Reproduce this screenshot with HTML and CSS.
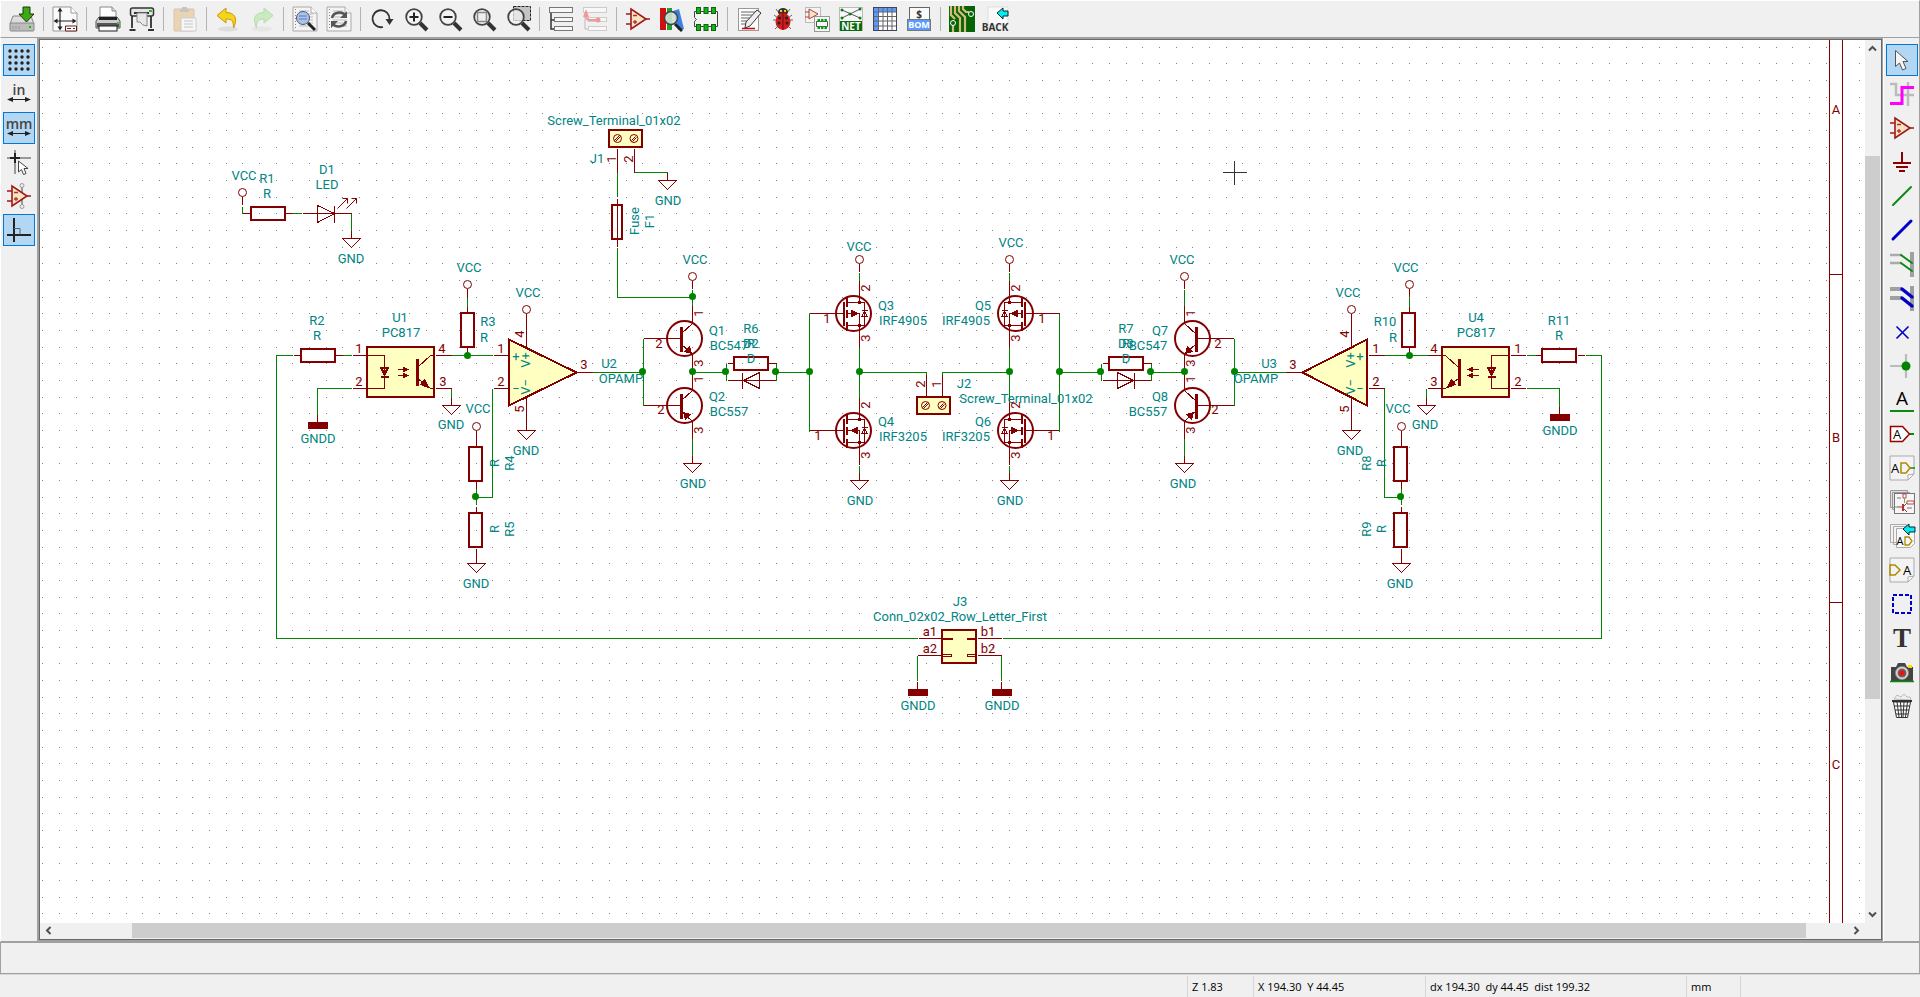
FILE: index.html
```html
<!DOCTYPE html>
<html lang="en">
<head>
<meta charset="utf-8">
<title>Schematic editor</title>
<link rel="stylesheet" href="styles.css">
</head>
<body>
<svg class="defs" aria-hidden="true">
<defs>
<g id="i-lens"><path d="M17 17l7 7" stroke="#333" stroke-width="4"/><circle cx="11" cy="11" r="7.8" fill="#f4f4f4" fill-opacity=".7" stroke="#444" stroke-width="1.8"/></g>
<g id="i-opamp"><path d="M1 8h5M1 18h5M20 13h5" stroke="#a01818" stroke-width="1.5"/><path d="M6 3v20l15-10z" fill="#f5e4c4" stroke="#a01818" stroke-width="1.6"/><path d="M8 9.5h4M8 16h4M10 14v4" stroke="#b03030" stroke-width="1.3"/></g>
<g id="i-page"><path d="M1 1h24v18l-6 6H1z" fill="#f3f3f3" stroke="#aaa"/><path d="M19 25v-5l6-1z" fill="#fff" stroke="#aaa"/></g>
<g id="i-sheet"><path d="M1 1h18l6 6v18H1z" fill="#f4f4f4" stroke="#aaa"/><path d="M19 1v6h6" fill="#fff" stroke="#aaa"/><path d="M7 5h10M7 8h14M7 11h14M7 14h14M7 17h14M7 20h14" stroke="#bbb"/><path d="M3.5 3v21" stroke="#888" stroke-dasharray="1 2"/></g>
</defs>
</svg>

<header class="toolbar">
<button class="tool" aria-label="Save"><svg viewBox="0 0 26 26"><path d="M4 10h18l3 8H1z" fill="#ddd" stroke="#888"/><rect x="1" y="17" width="24" height="8" rx="1" fill="#bcbcbc" stroke="#888"/><path d="M4 20v3M7 20v3M10 20v3" stroke="#999"/><rect x="20" y="20" width="2" height="2" fill="#0c0"/><path d="M14 1h7v7h4l-7.500 8L10 8h4z" fill="#3fa815" stroke="#143f06"/></svg></button>
<span class="sep"></span>
<button class="tool" aria-label="Page settings"><svg viewBox="0 0 26 26"><path d="M1 1h18l6 6v18H1z" fill="#fafafa" stroke="#999"/><path d="M19 1v6h6" fill="#fff" stroke="#999"/><path d="M8 3v20M3 15h20" stroke="#222" stroke-width="1.2"/><path d="M8 1.500l-2.500 4h5zM8 24.500l-2.500-4h5zM1.500 15l4-2.500v5zM24.500 15l-4-2.500v5z" fill="#222"/><path d="M13.500 20h11v5h-11zM15 22.500h4M21 22.500h2" fill="#fff" stroke="#602020"/></svg></button>
<span class="sep"></span>
<button class="tool" aria-label="Print"><svg viewBox="0 0 26 26"><path d="M5 1h12l4 4v9H5z" fill="#fff" stroke="#888"/><path d="M17 1v4h4" fill="#ddd" stroke="#888"/><path d="M4 11h18l3 4v7H1v-7z" fill="#ccc" stroke="#555"/><path d="M4 11h18v3H4z" fill="#222"/><rect x="2" y="17" width="22" height="4" fill="#555"/><rect x="4" y="20" width="18" height="5" fill="#fafafa" stroke="#222"/><rect x="22" y="16" width="2" height="2" fill="#3c3"/></svg></button>
<button class="tool" aria-label="Plot"><svg viewBox="0 0 26 26"><path d="M3 9v13M22 9v13" stroke="#444" stroke-width="2"/><path d="M.5 24h6M19 24h6" stroke="#333" stroke-width="2"/><rect x="1.500" y="2" width="23" height="8" rx="2" fill="#e4e4e4" stroke="#333" stroke-width="1.5"/><path d="M5 7h15" stroke="#333" stroke-width="2"/><path d="M8 7h10v13l-4-1-3-3H8z" fill="#e8e8e8" stroke="#888"/><rect x="20" y="4" width="3" height="2" fill="#1c1"/></svg></button>
<span class="sep"></span>
<button class="tool" aria-label="Paste" disabled><svg viewBox="0 0 26 26" class="dim"><rect x="2" y="3" width="20" height="22" rx="1" fill="#e6b878" stroke="#c8965a"/><path d="M8 6V3h2V1h5v2h2v3z" fill="#999"/><path d="M9 12h15v13H9z" fill="#fff" stroke="#aaa"/><path d="M12 15h9M12 18h9M12 21h9" stroke="#999"/></svg></button>
<span class="sep"></span>
<button class="tool" aria-label="Undo"><svg viewBox="0 0 26 26"><ellipse cx="13" cy="23" rx="10" ry="2.5" fill="#ddd"/><path d="M2 9.500L11 2v4.500c9 0 12 6 7.500 15.500 0-7-1-9-7.500-9V17z" fill="#f6d31c" stroke="#c79a00"/></svg></button>
<button class="tool" aria-label="Redo" disabled><svg viewBox="0 0 26 26" class="dim"><ellipse cx="13" cy="23" rx="10" ry="2.5" fill="#ddd"/><path d="M24 9.500L15 2v4.500c-9 0-12 6-7.500 15.500 0-7 1-9 7.500-9V17z" fill="#a4e890" stroke="#77cc66"/></svg></button>
<span class="sep"></span>
<button class="tool" aria-label="Find"><svg viewBox="0 0 26 26"><use href="#i-sheet"/><path d="M16 17l7 7" stroke="#222" stroke-width="3"/><circle cx="11" cy="12" r="6.5" fill="#a9c4ec" stroke="#556"/><path d="M7 10h8M7 13h8" stroke="#5a78b8"/></svg></button>
<button class="tool" aria-label="Find and replace"><svg viewBox="0 0 26 26"><use href="#i-sheet"/><path d="M6 12c1-6 10-7 13-3M20 15c-1 6-10 7-13 3" fill="none" stroke="#555" stroke-width="2.5"/><path d="M21 5v7h-7zM5 22v-7h7z" fill="#555"/></svg></button>
<span class="sep"></span>
<button class="tool" aria-label="Refresh"><svg viewBox="0 0 26 26"><path d="M14 21A8.500 8.500 0 1 1 20.500 13" fill="none" stroke="#333" stroke-width="1.8"/><path d="M16.500 13h8l-4 6z" fill="#333"/></svg></button>
<button class="tool" aria-label="Zoom in"><svg viewBox="0 0 26 26"><use href="#i-lens"/><path d="M6.500 11h9M11 6.500v9" stroke="#222" stroke-width="2"/></svg></button>
<button class="tool" aria-label="Zoom out"><svg viewBox="0 0 26 26"><use href="#i-lens"/><path d="M6.500 11h9" stroke="#222" stroke-width="2"/></svg></button>
<button class="tool" aria-label="Zoom to fit"><svg viewBox="0 0 26 26"><use href="#i-lens"/><rect x="6.5" y="6.5" width="9" height="9" fill="#eee" stroke="#888" stroke-width="1.5"/></svg></button>
<button class="tool" aria-label="Zoom to selection"><svg viewBox="0 0 26 26"><rect x="8.5" y=".5" width="17" height="14" fill="#c4c4c4" stroke="#222" stroke-dasharray="3 1"/><use href="#i-lens"/></svg></button>
<span class="sep"></span>
<button class="tool" aria-label="Hierarchy"><svg viewBox="0 0 26 26"><path d="M3 6v17h3M3 14h3" fill="none" stroke="#333" stroke-width="1.5"/><g fill="#f8f8f8" stroke="#777"><rect x="1.5" y="1.5" width="23" height="5"/><rect x="6.5" y="11.5" width="18" height="4"/><rect x="6.5" y="20.5" width="18" height="4"/></g></svg></button>
<button class="tool" aria-label="Leave sheet" disabled><svg viewBox="0 0 26 26"><path d="M3 6v17h3" fill="none" stroke="#bbb"/><g fill="#f8f8f8" stroke="#ccc"><rect x="1.5" y="1.5" width="23" height="5"/><rect x="6.5" y="11.5" width="18" height="4"/><rect x="6.5" y="20.5" width="18" height="4"/></g><path d="M16 14h-8c-3 0-4-2-4-5" fill="none" stroke="#f09898" stroke-width="2"/><path d="M4 3L1 11h6z" fill="#f09898"/><circle cx="16" cy="14" r="2.5" fill="#f09898"/></svg></button>
<span class="sep"></span>
<button class="tool" aria-label="Symbol editor"><svg viewBox="0 0 26 26"><use href="#i-opamp"/></svg></button>
<button class="tool" aria-label="Library browser"><svg viewBox="0 0 26 26"><rect x="1" y="2" width="6" height="22" fill="#d01010"/><rect x="8" y="2" width="5" height="22" fill="#20a030"/><path d="M14 5l6-2 5 20-6 1z" fill="#3c82e6"/><path d="M16 18l7 7" stroke="#222" stroke-width="3"/><circle cx="12" cy="12" r="6.5" fill="#cfe0d6" fill-opacity=".9" stroke="#444" stroke-width="1.5"/></svg></button>
<button class="tool" aria-label="Footprint editor"><svg viewBox="0 0 26 26"><path d="M1.500 5.500h23v15h-23v-5l2-2-2-2z" fill="#f4f4f4" stroke="#444"/><g fill="#0cb51c" stroke="#14600c"><rect x="3.5" y="1.5" width="4" height="6"/><rect x="11" y="1.5" width="4" height="6"/><rect x="18.5" y="1.5" width="4" height="6"/><rect x="3.5" y="18.5" width="4" height="6"/><rect x="11" y="18.5" width="4" height="6"/><rect x="18.5" y="18.5" width="4" height="6"/></g></svg></button>
<span class="sep"></span>
<button class="tool" aria-label="Annotate"><svg viewBox="0 0 26 26"><rect x="2.5" y="2.5" width="20" height="22" fill="#fdfdfd" stroke="#999"/><path d="M5 6h14M5 9h11M5 12h9M5 15h7M5 18h5" stroke="#666"/><path d="M6 22.500h13" stroke="#d00" stroke-width="1.5"/><path d="M21 4l4 3-11 13-5 2 1-6z" fill="#eee" stroke="#333"/></svg></button>
<button class="tool" aria-label="Rules check"><svg viewBox="0 0 26 26"><path d="M6 3l3 4M20 3l-3 4M3 14h4M23 14h-4M5 23l4-4M21 23l-4-4M4 9l4 3M22 9l-4 3" stroke="#666"/><ellipse cx="13" cy="6" rx="5" ry="4" fill="#333"/><path d="M10 5h2M14 5h2" stroke="#fc0" stroke-width="2"/><ellipse cx="13" cy="15.5" rx="7.500" ry="8.5" fill="#cf1c1c"/><path d="M13 7v17" stroke="#611"/><g fill="#222"><circle cx="9.5" cy="12" r="1.500"/><circle cx="16.5" cy="12" r="1.5"/><circle cx="9" cy="17" r="1.5"/><circle cx="17" cy="17" r="1.5"/></g></svg></button>
<button class="tool" aria-label="Assign footprints"><svg viewBox="0 0 26 26"><rect x="1.5" y="1.5" width="15" height="15" fill="#f4f4f4" stroke="#bbb"/><path d="M5 3v10l9-5z" fill="#f5e4c4" stroke="#b04040"/><path d="M1 6h4M1 11h4" stroke="#b04040"/><rect x="10.5" y="10.5" width="15" height="15" fill="#f6f6f6" stroke="#999"/><path d="M12.500 15.500h11v5h-11z" fill="none" stroke="#555"/><path d="M13.500 14.500h2.500M17 14.500h2.500M20.500 14.500h2.500M13.500 21.500h2.500M17 21.500h2.500M20.500 21.500h2.500" stroke="#0a9a18" stroke-width="3"/></svg></button>
<button class="tool" aria-label="Netlist"><svg viewBox="0 0 26 26"><rect x="1.5" y="1.5" width="23" height="23" fill="#f8f8f8" stroke="#bbb"/><path d="M4 4l18 8M22 3L4 12" stroke="#555"/><g fill="#0a7a14"><circle cx="4" cy="4" r="1.5"/><circle cx="22" cy="3" r="1.5"/><circle cx="4" cy="12" r="1.5"/><circle cx="22" cy="12" r="1.5"/><circle cx="12" cy="8" r="1.5"/></g><rect x="2" y="15" width="22" height="10" fill="#0b6a12"/><text class="icon-text light" x="13" y="23.5">NET</text></svg></button>
<button class="tool" aria-label="Symbol fields"><svg viewBox="0 0 26 26"><rect x="1.5" y="1.5" width="23" height="23" fill="#fff"/><path d="M1 1h24v5H6v19H1z" fill="#5b9bff"/><path d="M6.500 1v24M11 1v24M15.500 1v24M20 1v24M1 6h24M1 10.500h24M1 15h24M1 20h24" stroke="#666"/><rect x="1.5" y="1.5" width="23" height="23" fill="none" stroke="#445"/></svg></button>
<button class="tool" aria-label="Bill of materials"><svg viewBox="0 0 26 26"><rect x="3.5" y="1.5" width="20" height="14" fill="#fafafa" stroke="#666"/><text class="icon-text dark" x="13" y="12">$</text><rect x="1.5" y="13.5" width="23" height="11" fill="#5b9bff" stroke="#777"/><text class="icon-text light small" x="13" y="22">BOM</text></svg></button>
<span class="sep"></span>
<button class="tool" aria-label="Open board"><svg viewBox="0 0 26 26"><rect width="26" height="26" fill="#056405"/><path d="M2 0v9l4 4M6 0v7l5 5v14M10 0v5l6 6v15M14 0v3l3 3h3M4 17v9" fill="none" stroke="#dab97c" stroke-width="2.2"/><circle cx="22" cy="8" r="2.5" fill="#056405" stroke="#fff"/><circle cx="4" cy="17" r="2.5" fill="#056405" stroke="#fff"/></svg></button>
<button class="tool" aria-label="Back annotate"><svg viewBox="0 0 26 26"><path d="M5 1h20v18H5z" fill="#fafafa" stroke="#ddd"/><path d="M14 7l6-5v3h5v5h-5v3z" fill="#0ee" stroke="#123"/><text class="icon-text dark" x="12" y="25">BACK</text></svg></button>
</header>

<main class="workspace">
<nav class="side side-left" aria-label="Display options">
<button class="tool on" aria-label="Grid"><svg viewBox="0 0 26 26"><path d="M4 4h19M4 10h19M4 16h19M4 22h19" stroke="#222" stroke-width="3.4" stroke-linecap="round" stroke-dasharray="0 6"/></svg></button>
<button class="tool" aria-label="Inches"><svg viewBox="0 0 26 26"><text class="unit" x="13" y="14">in</text><path d="M4 18.500h18" stroke="#222"/><path d="M1 18.500l6-2.500v5zM25 18.500l-6-2.500v5z" fill="#222"/></svg></button>
<button class="tool on" aria-label="Millimetres"><svg viewBox="0 0 26 26"><text class="unit" x="13" y="14">mm</text><path d="M4 18.500h18" stroke="#222"/><path d="M1 18.500l6-2.500v5zM25 18.500l-6-2.500v5z" fill="#222"/></svg></button>
<button class="tool" aria-label="Cursor shape"><svg viewBox="0 0 26 26"><path d="M9 1v24M1 9h24" stroke="#999" stroke-width="2"/><path d="M9 4v10M4 9h10" stroke="#222" stroke-width="2"/><path d="M12.500 12v11l3-2.500 2 5 2.500-1-2-5h4z" fill="#fff" stroke="#444"/></svg></button>
<button class="tool" aria-label="Hidden pins"><svg viewBox="0 0 26 26"><path d="M16 4v18" stroke="#999" stroke-width="2"/><circle cx="16" cy="2.5" r="2" fill="#eee" stroke="#999"/><circle cx="16" cy="23.5" r="2" fill="#eee" stroke="#999"/><use href="#i-opamp"/></svg></button>
<button class="tool on" aria-label="Right angle lines"><svg viewBox="0 0 26 26"><path d="M8 1v24M1 18h24" stroke="#222" stroke-width="2"/><path d="M8 11.500h6v6" fill="none" stroke="#567"/></svg></button>
</nav>

<section class="editor" aria-label="Schematic">
<svg class="sheet" role="img" aria-label="H-bridge driver schematic">
<defs>
<pattern id="grid" width="50" height="50" patternUnits="userSpaceOnUse" x="2" y="7"><path d="M0 .5h1M17 .5h1M34 .5h1M0 16.500h1M17 16.500h1M34 16.500h1M0 33.500h1M17 33.500h1M34 33.500h1" stroke="#848484"/></pattern>
<g id="vcc"><circle r="4" class="ring"/><path d="M0 4V12"/></g>
<g id="gnd"><path d="M0-8V0M-9 0H9L0 9z"/></g>
<g id="gndd"><path d="M0-8V0"/><rect x="-9.5" y="-.5" width="19" height="6" class="solid"/></g>
<g id="rv"><rect x="-6.5" y="-17.5" width="13" height="34" class="thick"/></g>
<g id="rh"><rect x="-17.5" y="-6.5" width="34" height="13" class="thick"/></g>
<g id="opto"><rect x="-33.5" y="-25.5" width="67" height="50" class="thick body"/>
<path d="M-34-17H-16V16H-34M-20-5H-12L-16 3zM-20 4H-12M-3-3H6M-3 3H6M17-5L30-17H34M17 6L30 16H34"/><path class="solid" d="M3-5l4 2-4 2zM3 1l4 2-4 2zM28 15l-8-3 4-5z"/><path class="thick" d="M-20-5h8M-20 4h8M-19-4l3 6 3-6"/><path class="bar" d="M16.500-14V13"/></g>
<g id="npn"><circle r="17.5" class="ring2"/><path class="bar" d="M-3.500-12V13"/><path d="M-41 0H-4M-4-4L8-15V-33M-4 5L8 16V33"/><path class="solid" d="M7 15L0 13 5 8z"/></g>
<g id="pnp"><circle r="17.5" class="ring2"/><path class="bar" d="M-3.500-12V13"/><path d="M-41 0H-4M-4-4L8-15V-33M-4 5L8 16V33"/><path class="solid" d="M-1 7L6 9 1 14z"/></g>
<g id="mos"><circle r="17.5" class="ring2"/><path class="thick" d="M-9.500-12V12M-6.500-17V-7M-6.500-4V4M-6.500 8V17"/><path d="M-44 0H-10M-7-11H11V12H-7M-7 0H6V34M6-33V-11M8-3h6M8 3l3-5 3 5z"/><circle cx="6" cy="-11" r="1.5" class="solid"/><circle cx="6" cy="12" r="1.5" class="solid"/></g>
<g id="screws"><rect x="-16.5" y="-8.5" width="33" height="17" class="thick body"/><g class="round"><circle cx="-8" r="4"/><circle cx="8.5" r="4"/><path d="M-11 2l5-5M-10 3l5-5M6 2l4-4M7 3l4-4"/></g></g>
</defs>
<rect width="100%" height="100%" fill="url(#grid)"/>
<g transform="translate(-39.5 -39.5)">
<g class="part">
<path d="M1829 39V924M1842 39V924M1829 274H1842M1829 602H1842"/>
<use href="#vcc" x="242" y="192"/><use href="#rh" x="268" y="213"/><path d="M242 213H251M285 213H292M302 213H351M317 205V222L334 213zM334 205V222"/>
<path class="round" d="M337 208L347 198M342 198H347V203M346 208L356 198M351 198H356V203"/><use href="#gnd" x="351" y="238"/>
<use href="#rh" x="318" y="355"/><path d="M293 355H300M335 355H342M352 355H367M352 388H367M435 355H451M435 388H451"/><use href="#gndd" x="317" y="422"/>
<use href="#opto" x="400" y="372"/><use href="#gnd" x="451" y="405"/>
<use href="#vcc" x="467" y="284"/><use href="#rv" x="467" y="330"/><path d="M467 296V298M467 306V312M467 347V355"/>
<path class="thick body" d="M508.500 339V405L576 372z"/><path d="M526 313V347M526 397V422M576 372H592M493 355H508M493 388H508"/><use href="#vcc" x="526" y="309"/><use href="#gnd" x="526" y="430"/>
<use href="#vcc" x="476" y="426"/><use href="#rv" x="475" y="464"/><use href="#rv" x="475" y="530"/><path d="M476 438V446M476 481V488M476 506V512M476 548V556"/><use href="#gnd" x="476" y="563"/>
<use href="#screws" x="625" y="138"/><path d="M617 148V172M634 148V172M617 198V246"/><rect x="611.5" y="204.5" width="10" height="34" class="thick"/><use href="#gnd" x="667" y="180"/>
<use href="#vcc" x="692" y="276"/><use href="#npn" x="684" y="338"/><use href="#pnp" x="684" y="405"/><use href="#gnd" x="692" y="463"/>
<use href="#rh" x="751" y="363"/><path d="M727 363H733M768 363H776M727 380H776M742 372V388M759 372V388L743 380z"/>
<use href="#vcc" x="859" y="259"/><use href="#mos" x="853" y="313"/><path class="solid" d="M851 310l6 3-6 3z"/><use href="#mos" x="853" y="430"/><path class="solid" d="M857 427l-6 3 6 3z"/><use href="#gnd" x="859" y="480"/>
<use href="#screws" x="933" y="405"/><path d="M926 374V396M942 374V396"/>
<use href="#vcc" x="1009" y="259"/><use href="#mos" transform="translate(1015 313) scale(-1 1)"/><path class="solid" d="M1017 310l-6 3 6 3z"/><use href="#mos" transform="translate(1015 430) scale(-1 1)"/><path class="solid" d="M1011 427l6 3-6 3z"/><use href="#gnd" x="1009" y="480"/>
<use href="#rh" x="1126" y="363"/><path d="M1102 363H1108M1143 363H1151M1102 380H1151M1134 372V388M1117 372V388L1133 380z"/>
<use href="#vcc" x="1184" y="276"/><use href="#npn" transform="translate(1192 338) scale(-1 1)"/><use href="#pnp" transform="translate(1192 405) scale(-1 1)"/><use href="#gnd" x="1184" y="463"/>
<path class="thick body" d="M1366.500 339V405L1302 372z"/><path d="M1351 313V347M1351 397V422M1285 372H1301M1368 355H1384M1368 388H1384"/><use href="#vcc" x="1351" y="309"/><use href="#gnd" x="1351" y="430"/>
<use href="#vcc" x="1409" y="284"/><use href="#rv" x="1408" y="330"/><path d="M1409 306V312M1409 347V355M1427 355H1442M1427 388H1442M1510 355H1525M1510 388H1525M1535 355H1541M1577 355H1584"/>
<use href="#opto" transform="translate(1475 372) scale(-1 1)"/><use href="#gnd" x="1426" y="405"/><use href="#rh" x="1559" y="355"/><use href="#gndd" x="1559" y="414"/>
<use href="#vcc" x="1401" y="426"/><use href="#rv" x="1400" y="464"/><use href="#rv" x="1400" y="530"/><path d="M1401 438V446M1401 481V488M1401 506V512M1401 548V556"/><use href="#gnd" x="1401" y="563"/>
<rect x="941.5" y="629.5" width="34" height="33" class="thick body"/><path d="M918 638H941M977 638H1001M917 655H941M977 655H1001"/><path class="thick" d="M942 638.500H952M966 638.500H976"/><path d="M942 654H951V656H942M976 654H967V656H976"/><use href="#gndd" x="917" y="689"/><use href="#gndd" x="1001" y="689"/>
</g>
<path class="wire" d="M242 206V213M292 213H301M351 213V230M292 355H276V638H917M342 355H351M351 388H317V414M451 355H492M451 388V397M467 297V306M492 388V497H476M476 488V504M592 372H643M643 338V405M617 172V196M634 172H667M617 247V297H692M692 289V305M692 438V455M692 372H726M726 363V380M776 363V380M776 372H809M809 313V431M859 272V280M859 347V397M859 465V472M859 372H926V374M942 374V372H1009M1009 272V280M1009 347V397M1009 465V472M1059 313V431M1059 372H1101M1101 363V380M1151 363V380M1151 372H1184M1184 289V305M1184 438V455M1234 338V405M1234 372H1285M1384 355H1427M1409 297V306M1384 388V497H1401M1401 488V504M1426 388V397M1526 355H1535M1526 388H1559V406M1585 355H1601V638H1002M917 655V680M1001 655V680"/>
<g class="joint"><circle cx="467" cy="355" r="3.5"/><circle cx="475" cy="496" r="3.5"/><circle cx="642" cy="371" r="3.5"/><circle cx="692" cy="296" r="3.5"/><circle cx="692" cy="371" r="3.5"/><circle cx="725" cy="371" r="3.5"/><circle cx="775" cy="371" r="3.5"/><circle cx="809" cy="371" r="3.5"/><circle cx="859" cy="371" r="3.5"/><circle cx="1009" cy="371" r="3.5"/><circle cx="1059" cy="371" r="3.5"/><circle cx="1100" cy="371" r="3.5"/><circle cx="1150" cy="371" r="3.5"/><circle cx="1184" cy="371" r="3.5"/><circle cx="1234" cy="371" r="3.5"/><circle cx="1400" cy="496" r="3.5"/><circle cx="1409" cy="355" r="3.5"/></g>
<path class="cross" d="M1222 172H1246M1234 160V184"/>
</g>
<g transform="translate(-41 -41)">
<g class="label">
<text x="245" y="181">VCC</text><text x="268" y="184">R1</text><text x="268" y="199">R</text><text x="328" y="175">D1</text><text x="328" y="190">LED</text><text x="352" y="264">GND</text>
<text x="318" y="326">R2</text><text x="318" y="341">R</text><text x="319" y="444">GNDD</text><text x="401" y="323">U1</text><text x="402" y="338">PC817</text><text x="452" y="430">GND</text>
<text x="470" y="273">VCC</text><text x="489" y="327">R3</text><text x="485" y="343">R</text><text x="529" y="298">VCC</text><text x="479" y="414">VCC</text><text x="527" y="456">GND</text><text x="477" y="589">GND</text>
<text transform="translate(500 464) rotate(-90)">R</text><text transform="translate(515 464) rotate(-90)">R4</text><text transform="translate(500 530) rotate(-90)">R</text><text transform="translate(515 530) rotate(-90)">R5</text>
<text x="517" y="362">+</text><text x="517" y="394">−</text><text transform="translate(531 361) rotate(-90)">V+</text><text transform="translate(531 388) rotate(-90)">V−</text>
<text x="610" y="369">U2</text><text x="622" y="384">OPAMP</text>
<text x="615" y="126">Screw_Terminal_01x02</text><text x="598" y="164">J1</text><text x="669" y="206">GND</text><text transform="translate(640 222) rotate(-90)">Fuse</text><text transform="translate(655 222) rotate(-90)">F1</text>
<text x="696" y="265">VCC</text><text x="718" y="336">Q1</text><text x="730" y="351">BC547</text><text x="718" y="402">Q2</text><text x="730" y="417">BC557</text><text x="694" y="489">GND</text>
<text x="752" y="334">R6</text><text x="752" y="349">R</text><text x="752" y="349">D2</text><text x="752" y="364">D</text>
<text x="860" y="252">VCC</text><text x="887" y="311">Q3</text><text x="904" y="326">IRF4905</text><text x="887" y="427">Q4</text><text x="904" y="442">IRF3205</text><text x="861" y="506">GND</text>
<text x="965" y="389">J2</text><text x="1027" y="404">Screw_Terminal_01x02</text>
<text x="1012" y="248">VCC</text><text x="984" y="311">Q5</text><text x="967" y="326">IRF4905</text><text x="984" y="427">Q6</text><text x="967" y="442">IRF3205</text><text x="1011" y="506">GND</text>
<text x="1127" y="334">R7</text><text x="1127" y="349">R</text><text x="1127" y="349">D3</text><text x="1127" y="364">D</text>
<text x="1183" y="265">VCC</text><text x="1161" y="336">Q7</text><text x="1149" y="351">BC547</text><text x="1161" y="402">Q8</text><text x="1149" y="417">BC557</text><text x="1184" y="489">GND</text>
<text x="1270" y="369">U3</text><text x="1257" y="384">OPAMP</text><text x="1349" y="298">VCC</text><text x="1351" y="456">GND</text>
<text x="1361" y="362">+</text><text x="1361" y="394">−</text><text transform="translate(1356 361) rotate(-90)">V+</text><text transform="translate(1356 388) rotate(-90)">V−</text>
<text x="1407" y="273">VCC</text><text x="1386" y="327">R10</text><text x="1394" y="343">R</text><text x="1399" y="414">VCC</text><text x="1426" y="430">GND</text><text x="1401" y="589">GND</text>
<text transform="translate(1372 464) rotate(-90)">R8</text><text transform="translate(1387 464) rotate(-90)">R</text><text transform="translate(1372 530) rotate(-90)">R9</text><text transform="translate(1387 530) rotate(-90)">R</text>
<text x="1477" y="323">U4</text><text x="1477" y="338">PC817</text><text x="1560" y="326">R11</text><text x="1560" y="341">R</text><text x="1561" y="436">GNDD</text>
<text x="961" y="607">J3</text><text x="961" y="622">Conn_02x02_Row_Letter_First</text><text x="919" y="711">GNDD</text><text x="1003" y="711">GNDD</text>
</g>
<g class="label pin">
<text x="1837" y="115">A</text><text x="1837" y="443">B</text><text x="1837" y="770">C</text>
<text x="360" y="354">1</text><text x="360" y="387">2</text><text x="443" y="354">4</text><text x="444" y="387">3</text><text x="502" y="354">1</text><text x="502" y="387">2</text><text x="585" y="370">3</text>
<text transform="translate(525 335) rotate(-90)">4</text><text transform="translate(525 410) rotate(-90)">5</text>
<text transform="translate(617 160) rotate(-90)">1</text><text transform="translate(634 160) rotate(-90)">2</text>
<text x="660" y="349">2</text><text x="662" y="415">2</text><text transform="translate(704 314) rotate(-90)">1</text><text transform="translate(704 364) rotate(-90)">3</text><text transform="translate(704 380) rotate(-90)">1</text><text transform="translate(704 431) rotate(-90)">3</text>
<text x="828" y="324">1</text><text x="819" y="441">1</text><text transform="translate(871 289) rotate(-90)">2</text><text transform="translate(871 339) rotate(-90)">3</text><text transform="translate(871 406) rotate(-90)">2</text><text transform="translate(871 456) rotate(-90)">3</text>
<text transform="translate(926 385) rotate(-90)">2</text><text transform="translate(942 385) rotate(-90)">1</text>
<text x="1043" y="324">1</text><text x="1052" y="441">1</text><text transform="translate(1021 289) rotate(-90)">2</text><text transform="translate(1021 339) rotate(-90)">3</text><text transform="translate(1021 406) rotate(-90)">2</text><text transform="translate(1021 456) rotate(-90)">3</text>
<text x="1219" y="349">2</text><text x="1216" y="415">2</text><text transform="translate(1196 314) rotate(-90)">1</text><text transform="translate(1196 364) rotate(-90)">3</text><text transform="translate(1196 380) rotate(-90)">1</text><text transform="translate(1196 431) rotate(-90)">3</text>
<text x="1294" y="370">3</text><text x="1377" y="354">1</text><text x="1377" y="387">2</text><text transform="translate(1350 335) rotate(-90)">4</text><text transform="translate(1350 410) rotate(-90)">5</text>
<text x="1435" y="354">4</text><text x="1435" y="387">3</text><text x="1519" y="354">1</text><text x="1519" y="387">2</text>
<text x="931" y="637">a1</text><text x="931" y="654">a2</text><text x="989" y="637">b1</text><text x="989" y="654">b2</text>
</g>
</g>
</svg>
<div class="scroll scroll-v"><button class="arrow" aria-label="Scroll up"><svg viewBox="0 0 9 9"><path d="M1 6.500L4.500 3 8 6.500"/></svg></button><span class="v-before"></span><span class="v-thumb"></span><span class="v-after"></span><button class="arrow" aria-label="Scroll down"><svg viewBox="0 0 9 9"><path d="M1 2.500L4.500 6 8 2.500"/></svg></button></div>
<div class="scroll scroll-h"><button class="arrow" aria-label="Scroll left"><svg viewBox="0 0 9 9"><path d="M6.500 1L3 4.500 6.500 8"/></svg></button><span class="h-before"></span><span class="h-thumb"></span><span class="h-after"></span><button class="arrow" aria-label="Scroll right"><svg viewBox="0 0 9 9"><path d="M2.500 1L6 4.500 2.500 8"/></svg></button></div>
</section>

<nav class="side side-right" aria-label="Drawing tools">
<button class="tool on" aria-label="Select"><svg viewBox="0 0 26 26"><path d="M6.500 3.500v16l4-3.500 3 7 3.500-1.500-3-7h5z" fill="#f6f6f6" stroke="#555"/></svg></button>
<button class="tool" aria-label="Highlight net"><svg viewBox="0 0 26 26"><path d="M1 3h6v11h18M19 1v24" fill="none" stroke="#bbb" stroke-width="2.5"/><path d="M1 22.500h12v-16h12" fill="none" stroke="#f0f" stroke-width="3"/></svg></button>
<button class="tool" aria-label="Place symbol"><svg viewBox="0 0 26 26"><use href="#i-opamp"/></svg></button>
<button class="tool" aria-label="Place power"><svg viewBox="0 0 26 26"><path d="M13 3v11M4 14h18M7 18h12M10 22h6" stroke="#800" stroke-width="2"/></svg></button>
<button class="tool" aria-label="Draw wire"><svg viewBox="0 0 26 26"><path d="M4 22L22 4" stroke="#0a8a10" stroke-width="2" stroke-linecap="round"/></svg></button>
<button class="tool" aria-label="Draw bus"><svg viewBox="0 0 26 26"><path d="M4 22L22 4" stroke="#0000c8" stroke-width="3" stroke-linecap="round"/></svg></button>
<button class="tool" aria-label="Wire entry"><svg viewBox="0 0 26 26"><path d="M1 4h12M1 12h12" stroke="#aaa" stroke-width="2.5"/><path d="M23 1v25" stroke="#a0a0a0" stroke-width="4"/><path d="M12 4l11 8M12 12l11 8" stroke="#0a8a10" stroke-width="2" stroke-linecap="round"/></svg></button>
<button class="tool" aria-label="Bus entry"><svg viewBox="0 0 26 26"><path d="M1 4h12M1 13h12" stroke="#a0a0a0" stroke-width="4"/><path d="M23 1v25" stroke="#a0a0a0" stroke-width="4"/><path d="M13 4l10 8M13 13l10 8" stroke="#0000c8" stroke-width="3.5" stroke-linecap="round"/></svg></button>
<button class="tool" aria-label="No connect"><svg viewBox="0 0 26 26"><path d="M7.500 7.500l12 12M19.500 7.500l-12 12" stroke="#0000c8" stroke-width="1.6"/></svg></button>
<button class="tool" aria-label="Junction"><svg viewBox="0 0 26 26"><path d="M17 1v24M1 13h16" stroke="#bbb" stroke-width="2.2"/><circle cx="17" cy="13" r="4.5" fill="#008400"/></svg></button>
<button class="tool" aria-label="Net label"><svg viewBox="0 0 26 26"><text class="glyph big" x="13" y="18">A</text><path d="M1 24h24" stroke="#0a8a10" stroke-width="2"/></svg></button>
<button class="tool" aria-label="Global label"><svg viewBox="0 0 26 26"><path d="M20 13h5" stroke="#0a8a10" stroke-width="2"/><path d="M1.500 5.500h12l7 7.500-7 7.500h-12z" fill="#fff" stroke="#900" stroke-width="1.5"/><text class="glyph" x="8" y="18">A</text></svg></button>
<button class="tool" aria-label="Hierarchical label"><svg viewBox="0 0 26 26"><use href="#i-page"/><text class="glyph" x="6" y="18">A</text><path d="M21 13h5" stroke="#0a8a10" stroke-width="1.5"/><path d="M12 8h5l4 5-4 5h-5z" fill="none" stroke="#b08a00" stroke-width="1.5"/></svg></button>
<button class="tool" aria-label="Hierarchical sheet"><svg viewBox="0 0 26 26"><path d="M1.500 1.500h17v17h-17zM3.500 3.500h17v17h-17z" fill="#e0e0e0" stroke="#999"/><rect x="5.5" y="4.5" width="20" height="20" fill="#f6f6f6" stroke="#777"/><path d="M8 18h6M14 18l4-4M14 19l4 4" stroke="#a33"/><path d="M14 15v7" stroke="#a33" stroke-width="2"/><path d="M14 5h3v4h-3zM18 12h7v3h-7z" fill="#fff" stroke="#b44"/><path d="M15.500 9v5M8 18h-2" stroke="#5b5"/><path d="M8 9h4M18 19h5" stroke="#777"/></svg></button>
<button class="tool" aria-label="Import sheet pin"><svg viewBox="0 0 26 26"><path d="M1.500 1.500h16v18h-16zM4.500 3.500h16v18h-16z" fill="#f4f4f4" stroke="#aaa"/><path d="M7.500 5.500h18v15l-4 4h-14z" fill="#f8f8f8" stroke="#aaa"/><text class="glyph less" x="11" y="22">A</text><path d="M16 14h4l3 4-3 4h-4z" fill="none" stroke="#b08a00" stroke-width="1.3"/><path d="M14 6l6-5v3h6v5h-6v3z" fill="#0ee" stroke="#123"/></svg></button>
<button class="tool" aria-label="Sheet pin"><svg viewBox="0 0 26 26"><use href="#i-page"/><path d="M1 8h5l5 5-5 5H1z" fill="none" stroke="#b08a00" stroke-width="1.5"/><text class="glyph" x="18" y="18">A</text></svg></button>
<button class="tool" aria-label="Graphic lines"><svg viewBox="0 0 26 26"><rect x="4" y="4" width="18" height="18" fill="none" stroke="#0000d0" stroke-width="2" stroke-dasharray="4 2"/></svg></button>
<button class="tool" aria-label="Text"><svg viewBox="0 0 26 26"><text class="glyph serif" x="13" y="22">T</text></svg></button>
<button class="tool" aria-label="Image"><svg viewBox="0 0 26 26"><path d="M2 8h5l2-4h7l2 4h6v14H2z" fill="#444"/><rect x="19" y="6" width="4" height="3" fill="#fd0"/><circle cx="13" cy="14" r="6.5" fill="#ddd" stroke="#888"/><circle cx="13" cy="14" r="4.5" fill="#666"/><circle cx="13" cy="14" r="2.8" fill="#e11"/><path d="M1 22.500h24" stroke="#0a8a10" stroke-width="1.5"/></svg></button>
<button class="tool" aria-label="Delete"><svg viewBox="0 0 26 26"><path d="M5 6l3-4 4 2 3-3 3 3 3 0 1 3z" fill="#eee" stroke="#bbb"/><path d="M3 8h20" stroke="#333" stroke-width="2"/><path d="M4.500 9h17l-3 15.500h-11z" fill="#fff" stroke="#333"/><path d="M8 9l2 15M11.500 9l1 15M15 9l-1 15M18.500 9l-2 15M5 13h16M6 17h14M7 21h12" stroke="#333"/></svg></button>
</nav>
</main>

<section class="message" aria-label="Messages"></section>
<footer class="status"><span class="cell fill"></span><span class="cell zoom">Z 1.83</span><span class="cell pos">X 194.30&nbsp; Y 44.45</span><span class="cell delta">dx 194.30&nbsp; dy 44.45&nbsp; dist 199.32</span><span class="cell unit-cell">mm</span><span class="cell last"></span></footer>
</body>
</html>
```
FILE: styles.css
```css
* { box-sizing: border-box; }
body {
  margin: 0;
  height: 100vh;
  display: flex;
  flex-direction: column;
  overflow: hidden;
  background: #f0f0f0;
  color: #000;
  font-family: "Open Sans", "Noto Sans", sans-serif;
  font-size: 11px;
}
.defs { width: 0; height: 0; position: absolute; }
button { margin: 0; padding: 0; border: 0; background: none; }

.toolbar {
  display: flex;
  align-items: center;
  flex: none;
  height: 38px;
  padding-left: 4px;
  border: 1px solid #fff;
  border-right-color: #a0a0a0;
  border-bottom-color: #a0a0a0;
}
.tool {
  display: flex;
  flex: none;
  align-items: center;
  justify-content: center;
  width: 34px;
  height: 34px;
}
.tool svg { width: 26px; height: 26px; overflow: visible; fill: none; }
.dim { opacity: .5; }
.sep { flex: none; width: 1px; height: 24px; margin: 0 4px; background: #b4b4b4; }

.icon-text { font: 700 10px "Open Sans", sans-serif; text-anchor: middle; }
.icon-text.small { font-size: 9px; }
.light { fill: #fff; }
.dark { fill: #333; }
.unit { font: 600 14px "Open Sans", sans-serif; text-anchor: middle; fill: #444; }
.glyph { font: 400 13px "Open Sans", sans-serif; text-anchor: middle; fill: #000; }
.glyph.big { font-size: 19px; }
.glyph.less { font-size: 11px; }
.glyph.serif { font: 700 27px "Liberation Serif", serif; fill: #333; }

.workspace { display: flex; flex: 1; min-height: 0; }
.side {
  display: flex;
  flex: none;
  flex-direction: column;
  gap: 2px;
  padding-top: 6px;
  border-bottom: 1px solid #a0a0a0;
}
.side .tool { width: 32px; height: 32px; border: 1px solid transparent; }
.side .tool.on { background: #b3d7f3; border-color: #0078d7; }
.side-left { width: 37px; padding-left: 2px; border-left: 1px solid #fff; }
.side-right { width: 37px; padding-left: 2px; border-left: 1px solid #fff; border-right: 1px solid #a0a0a0; }

.editor {
  display: grid;
  grid-template-columns: minmax(0, 1fr) 16px;
  grid-template-rows: minmax(0, 1fr) 16px;
  flex: 1;
  min-width: 0;
  border: 1px solid #696969;
  outline: 2px solid #a0a0a0;
  margin: 1px 1px 2px 2px;
  background: #f0f0f0;
}
.sheet { width: 100%; height: 100%; background: #fff; }
.scroll { display: flex; background: #f0f0f0; }
.scroll-v { flex-direction: column; padding-right: 1px; }
.scroll-h { padding-bottom: 1px; }
.arrow { display: flex; flex: none; align-items: center; justify-content: center; width: 17px; }
.scroll-v .arrow { width: auto; height: 17px; }
.arrow svg { width: 9px; height: 9px; fill: none; stroke: #505050; stroke-width: 2px; }
.v-before { flex: 99; }
.v-thumb { flex: 544; background: #cdcdcd; }
.v-after { flex: 207; }
.h-before { flex: 75; }
.h-thumb { flex: 1673; background: #cdcdcd; }
.h-after { flex: 42; }

.part { fill: none; stroke: #840000; stroke-width: 1px; shape-rendering: crispEdges; }
.thick { stroke-width: 2px; }
.bar { stroke-width: 3px; }
.ring { fill: #fff; shape-rendering: auto; }
.ring2 { stroke-width: 2px; shape-rendering: auto; }
.round { shape-rendering: auto; }
.body { fill: #ffffc2; }
.solid { fill: #840000; }
.wire { fill: none; stroke: #008400; stroke-width: 1px; shape-rendering: crispEdges; }
.joint { fill: #008400; }
.cross { stroke: #333; shape-rendering: crispEdges; }
.label { font: 400 13px Roboto, "Open Sans", sans-serif; text-anchor: middle; fill: #008484; }
.pin { fill: #840000; }

.message {
  flex: none;
  height: 32px;
  border: 1px solid #a0a0a0;
}
.status { display: flex; flex: none; height: 23px; border-top: 1px solid #d7d7d7; }
.cell { flex: none; padding: 0 4px; margin-top: 1px; line-height: 21px; white-space: pre; border-right: 1px solid #d7d7d7; }
.fill { flex: 1; }
.zoom { width: 66px; }
.pos { width: 172px; }
.delta { width: 261px; }
.unit-cell { width: 54px; }
.last { width: 179px; border: 0; }
```
